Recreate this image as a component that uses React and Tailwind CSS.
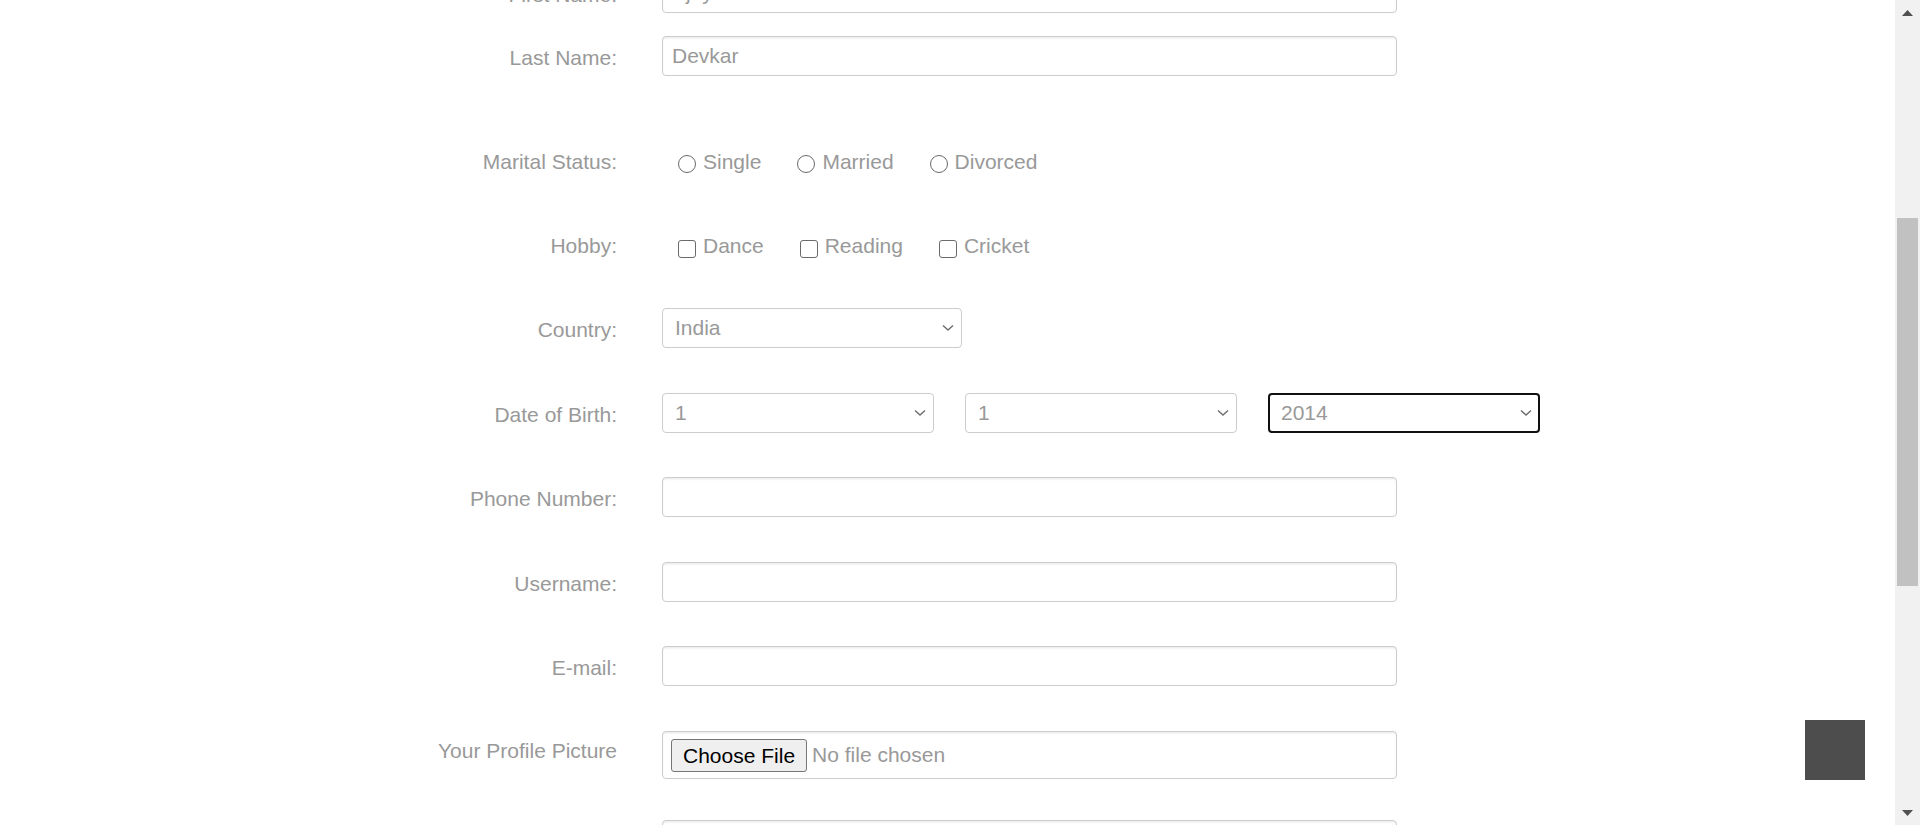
import { useState } from 'react'

const font = "font-['Liberation_Sans',Arial,sans-serif]"
const boxCls = 'h-[40px] rounded-[4px] border border-[#ccc] bg-white text-[21px] text-[#999] shadow-[inset_0_1.5px_1.5px_rgba(0,0,0,0.075)] outline-none'

function Row({ label, className = '', labelPad = 'pt-[4px]', children }) {
  return (
    <div className={`flex items-center gap-[45px] ${className}`}>
      <label className={`w-[220px] shrink-0 text-right text-[#999] ${labelPad}`}>{label}</label>
      {children}
    </div>
  )
}

function TextBox({ value = '' }) {
  return <input defaultValue={value} className={`${boxCls} w-[735px] px-[9px] ${font}`} />
}

function Chevron() {
  return (
    <svg width="12" height="7" viewBox="0 0 12 7" className="pointer-events-none absolute right-[8px] top-1/2 -translate-y-1/2">
      <path d="M1 1 L6 5.5 L11 1" fill="none" stroke="#6d6d6d" strokeWidth="1.4" />
    </svg>
  )
}

function Select({ value, width, focused }) {
  return (
    <div className="relative" style={{ width }}>
      <select
        defaultValue={value}
        className={`h-[40px] w-full appearance-none rounded-[4px] bg-white text-[21px] text-[#999] outline-none ${font} ${
          focused ? 'border-[2.5px] border-[#101010] pl-[11px]' : 'border border-[#ccc] pl-[12px]'
        }`}
      >
        <option>{value}</option>
      </select>
      <Chevron />
    </div>
  )
}

function Radio({ label, name, checked, onChange }) {
  return (
    <label className="flex items-center mr-[36px] cursor-pointer">
      <input type="radio" name={name} checked={checked} onChange={onChange} className="hidden" />
      <span className="mt-[3px] w-[18px] h-[18px] rounded-full border-[1.5px] border-[#6a6a6a] flex items-center justify-center">
        {checked && <span className="w-[9px] h-[9px] rounded-full bg-[#0075ff]" />}
      </span>
      <span className="ml-[7px]">{label}</span>
    </label>
  )
}

function Check({ label, checked, onChange }) {
  return (
    <label className="flex items-center mr-[36px] cursor-pointer">
      <input type="checkbox" checked={checked} onChange={onChange} className="hidden" />
      <span className="mt-[5px] w-[18px] h-[18px] rounded-[3px] border-[1.5px] border-[#6a6a6a] bg-white" />
      <span className="ml-[7px]">{label}</span>
    </label>
  )
}

export default function App() {
  const [status, setStatus] = useState('')
  const [hobbies, setHobbies] = useState([])

  const toggle = h => setHobbies(hs => (hs.includes(h) ? hs.filter(x => x !== h) : [...hs, h]))

  return (
    <div className={`h-[825px] w-full overflow-hidden bg-white flex ${font} text-[21px]`}>
      {/* Page */}
      <div className="relative flex-1 overflow-hidden">
        <form className="pl-[397px] -mt-[27px] flex flex-col">
          <Row label="First Name:">
            <TextBox value="Ajay" />
          </Row>
          <Row label="Last Name:" className="mt-[23px]">
            <TextBox value="Devkar" />
          </Row>

          <Row label="Marital Status:" labelPad="" className="mt-[66px] h-[40px]">
            <div className="flex items-center pl-[16px] text-[#999]">
              {['Single', 'Married', 'Divorced'].map(s => (
                <Radio key={s} label={s} name="status" checked={status === s} onChange={() => setStatus(s)} />
              ))}
            </div>
          </Row>

          <Row label="Hobby:" labelPad="" className="mt-[44px] h-[40px]">
            <div className="flex items-center pl-[16px] text-[#999]">
              {['Dance', 'Reading', 'Cricket'].map(h => (
                <Check key={h} label={h} checked={hobbies.includes(h)} onChange={() => toggle(h)} />
              ))}
            </div>
          </Row>

          <Row label="Country:" className="mt-[42px]">
            <Select value="India" width={300} />
          </Row>

          <Row label="Date of Birth:" className="mt-[45px]">
            <div className="flex gap-[31px]">
              <Select value="1" width={272} />
              <Select value="1" width={272} />
              <Select value="2014" width={272} focused />
            </div>
          </Row>

          <Row label="Phone Number:" className="mt-[44px]">
            <TextBox />
          </Row>
          <Row label="Username:" className="mt-[45px]">
            <TextBox />
          </Row>
          <Row label="E-mail:" className="mt-[44px]">
            <TextBox />
          </Row>

          <Row label="Your Profile Picture" className="mt-[45px] !items-start">
            <div className="h-[48px] w-[735px] rounded-[4px] border border-[#ccc] bg-white flex items-center pl-[8px] shadow-[inset_0_1.5px_1.5px_rgba(0,0,0,0.075)]">
              <button type="button" className="h-[33px] px-[11px] rounded-[3px] border border-[#767676] bg-[#efefef] text-black text-[21px] leading-none">
                Choose File
              </button>
              <span className="ml-[5px] text-[#999]">No file chosen</span>
            </div>
          </Row>

          <Row label="" className="mt-[41px]">
            <TextBox />
          </Row>
        </form>

        {/* back to top */}
        <button type="button" className="absolute right-[30px] bottom-[45px] w-[60px] h-[60px] bg-[#4d4d4d]" />
      </div>

      {/* Scrollbar */}
      <div className="w-[25px] shrink-0 bg-[#f1f1f1] flex flex-col">
        <div className="h-[25px] flex items-center justify-center">
          <svg width="11" height="6" viewBox="0 0 11 6"><polygon points="5.5,0 11,6 0,6" fill="#505050" /></svg>
        </div>
        <div className="flex-1">
          <div className="mt-[193px] mx-[2px] h-[368px] bg-[#c1c1c1]" />
        </div>
        <div className="h-[25px] flex items-center justify-center">
          <svg width="11" height="6" viewBox="0 0 11 6"><polygon points="0,0 11,0 5.5,6" fill="#505050" /></svg>
        </div>
      </div>
    </div>
  )
}
